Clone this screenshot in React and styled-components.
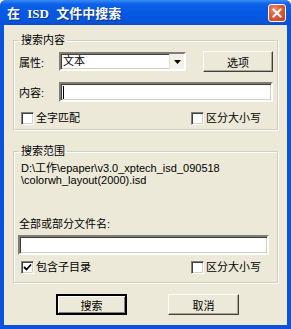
import React from 'react'
import styled, { createGlobalStyle } from 'styled-components'

const GlobalStyle = createGlobalStyle`
  html, body {
    margin: 0;
    padding: 0;
    background: #ffffff;
  }
  body {
    font-family: "Liberation Sans", "Noto Sans CJK SC", sans-serif;
    font-size: 11px;
    color: #000000;
  }
`

const App = () => {
  return (
    <>
      <GlobalStyle />
      <Window>
        <TitleBar>
          <Title>在 ISD 文件中搜索</Title>
          <CloseButton>
            <svg width='10' height='10' viewBox='0 0 10 10'>
              <path d='M1.5 1.5 L8.5 8.5 M8.5 1.5 L1.5 8.5' stroke='#ffffff' strokeWidth='2' strokeLinecap='square' />
            </svg>
          </CloseButton>
        </TitleBar>
        <Client>
          <Group>
            <Legend>搜索内容</Legend>
            <GroupBody $top={4} $bottom={4}>
              <FieldRow>
                <Label>属性:</Label>
                <Combo>
                  <ComboText>文本</ComboText>
                  <ComboArrow>
                    <svg width='7' height='4' viewBox='0 0 7 4'>
                      <path d='M0 0 H7 L3.5 4 Z' fill='#000000' />
                    </svg>
                  </ComboArrow>
                </Combo>
                <PushButton $width={70}>选项</PushButton>
              </FieldRow>
              <FieldRow>
                <Label>内容:</Label>
                <TextBox $width={214}>
                  <Caret />
                </TextBox>
              </FieldRow>
              <CheckRow>
                <Check>
                  <Box />
                  <span>全字匹配</span>
                </Check>
                <Check>
                  <Box />
                  <span>区分大小写</span>
                </Check>
              </CheckRow>
            </GroupBody>
          </Group>

          <Group $gap={15}>
            <Legend>搜索范围</Legend>
            <GroupBody $top={3} $bottom={8}>
              <PathText>
                D:\工作\epaper\v3.0_xptech_isd_090518
                <br />
                \colorwh_layout(2000).isd
              </PathText>
              <NameLabel>全部或部分文件名:</NameLabel>
              <TextBox $width={251} $shift={-1} />
              <CheckRow $top={6}>
                <Check>
                  <Box>
                    <svg width='9' height='9' viewBox='0 0 9 9'>
                      <path d='M1 4 L3.5 6.5 L8 1.5' stroke='#000000' strokeWidth='1.8' fill='none' />
                    </svg>
                  </Box>
                  <span>包含子目录</span>
                </Check>
                <Check>
                  <Box />
                  <span>区分大小写</span>
                </Check>
              </CheckRow>
            </GroupBody>
          </Group>

          <ButtonRow>
            <PushButton $width={71} $default>搜索</PushButton>
            <PushButton $width={71}>取消</PushButton>
          </ButtonRow>
        </Client>
      </Window>
    </>
  )
}

const Window = styled.div`
  width: 291px;
  height: 329px;
  box-sizing: border-box;
  display: flex;
  flex-direction: column;
  background: #0a54dc;
  border-radius: 6px 6px 0 0;
  overflow: hidden;
`

const TitleBar = styled.div`
  height: 25px;
  flex: none;
  display: flex;
  align-items: center;
  justify-content: space-between;
  padding: 0 5px 0 7px;
  background: linear-gradient(
    to bottom,
    #3b8cf5 0px,
    #0d62e8 4px,
    #0559e3 12px,
    #0656dd 20px,
    #0a4fcf 25px
  );
`

const Title = styled.div`
  font-family: "Liberation Serif", "Noto Sans CJK SC", serif;
  font-weight: bold;
  font-size: 13px;
  color: #ffffff;
  white-space: pre;
  word-spacing: 4px;
  text-shadow: 1px 1px 0 #0a2f8a;
`

const CloseButton = styled.div`
  width: 18px;
  height: 18px;
  box-sizing: border-box;
  display: flex;
  align-items: center;
  justify-content: center;
  border: 1px solid #ffffff;
  border-radius: 3px;
  background: radial-gradient(circle at 35% 30%, #f08a6c 0%, #dc5a36 45%, #c2401c 100%);
`

const Client = styled.div`
  flex: 1;
  margin: 0 4px 4px 4px;
  background: #ece9d8;
  padding: 9px 9px 0 9px;
  display: flex;
  flex-direction: column;
`

const Group = styled.fieldset`
  margin: ${p => p.$gap || 0}px 0 0 0;
  padding: 0;
  border: 1px solid #d0d0bf;
  box-shadow: inset 1px 1px 0 #ffffff, 1px 1px 0 #ffffff;
  min-width: 0;
`

const Legend = styled.legend`
  margin-left: 5px;
  padding: 0 2px;
  line-height: 13px;
  font-size: 11px;
`

const GroupBody = styled.div`
  padding: ${p => p.$top}px 4px ${p => p.$bottom}px 5px;
  display: flex;
  flex-direction: column;
`

const FieldRow = styled.div`
  display: flex;
  align-items: center;
  margin-bottom: 10px;
  min-height: 20px;
`

const Label = styled.div`
  width: 40px;
  flex: none;
`

const sunken = `
  box-sizing: border-box;
  background: #ffffff;
  border-style: solid;
  border-width: 2px;
  border-color: #7f7d74 #ffffff #ffffff #7f7d74;
  box-shadow: inset 1px 1px 0 #3f3d38, inset -1px -1px 0 #d4d0c8;
`

const Combo = styled.div`
  ${sunken}
  width: 127px;
  height: 19px;
  display: flex;
  align-items: center;
  justify-content: space-between;
  padding-left: 2px;
`

const ComboText = styled.span`
  line-height: 13px;
`

const ComboArrow = styled.div`
  width: 14px;
  height: 15px;
  display: flex;
  align-items: center;
  justify-content: center;
  background: #f2f1ea;
  border-left: 1px solid #e4e2d6;
`

const TextBox = styled.div`
  ${sunken}
  width: ${p => p.$width}px;
  height: 20px;
  margin-left: ${p => p.$shift || 0}px;
  display: flex;
  align-items: center;
  padding-left: 2px;
`

const Caret = styled.span`
  width: 1px;
  height: 13px;
  background: #000000;
`

const PushButton = styled.div`
  width: ${p => p.$width}px;
  height: 21px;
  box-sizing: border-box;
  margin-left: auto;
  display: flex;
  align-items: center;
  justify-content: center;
  background: #ece9d8;
  border-style: solid;
  border-width: ${p => (p.$default ? 2 : 1)}px;
  border-color: ${p =>
    p.$default ? '#000000' : '#ffffff #404040 #404040 #ffffff'};
  box-shadow: ${p =>
    p.$default
      ? 'inset 1px 1px 0 #ffffff, inset -1px -1px 0 #808080'
      : 'inset -1px -1px 0 #aca899'};
`

const CheckRow = styled.div`
  display: flex;
  justify-content: space-between;
  margin-top: ${p => p.$top || 0}px;
  padding-left: 2px;
  padding-right: 2px;
`

const Check = styled.div`
  display: flex;
  align-items: center;
  gap: 2px;
  width: 90px;
  line-height: 13px;

  &:last-child {
    width: 80px;
  }
`

const Box = styled.div`
  width: 13px;
  height: 13px;
  box-sizing: border-box;
  flex: none;
  display: flex;
  align-items: center;
  justify-content: center;
  background: #ffffff;
  border-style: solid;
  border-width: 1px;
  border-color: #808080 #ffffff #ffffff #808080;
  box-shadow: inset 1px 1px 0 #404040, inset -1px -1px 0 #d4d0c8;
`

const PathText = styled.div`
  padding-left: 2px;
  line-height: 12px;
  margin-top: 1px;
`

const NameLabel = styled.div`
  margin-top: 32px;
  margin-bottom: 4px;
  line-height: 13px;
`

const ButtonRow = styled.div`
  display: flex;
  justify-content: center;
  gap: 41px;
  margin-top: 11px;
  padding-left: 4px;

  & > div {
    margin-left: 0;
  }
`

export default App
